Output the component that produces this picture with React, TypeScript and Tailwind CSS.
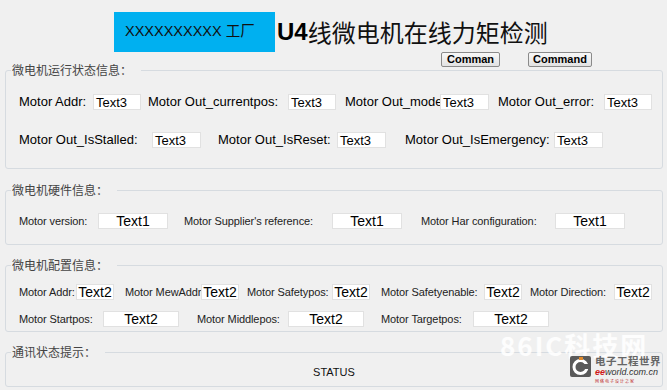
import type { ReactNode } from "react";

const Label = ({ children, className = "" }: { children: ReactNode; className?: string }) => (
  <span className={`shrink-0 whitespace-nowrap ${className}`}>{children}</span>
);

const Box = ({ text, className = "" }: { text: string; className?: string }) => (
  <div
    className={`flex h-[16px] shrink-0 items-center bg-white border border-[#e1e1e1] pt-[1px] whitespace-nowrap overflow-hidden ${className}`}
  >
    {text}
  </div>
);

const Group = ({ title, children, className = "" }: { title: string; children: ReactNode; className?: string }) => (
  <fieldset className={`ml-[5px] w-[658px] border border-[#d6dbe0] rounded-[3px] px-0 ${className}`}>
    <legend className="ml-[5px] pl-[1px] pr-[9px] text-[12px] leading-[16px] text-[#444] font-['Noto_Sans_CJK_SC',sans-serif]">
      {title}
    </legend>
    {children}
  </fieldset>
);

export default function App() {
  return (
    <div className="relative w-[667px] h-[390px] overflow-hidden bg-[#f0f0f0] pt-[12px] text-black font-['Liberation_Sans','Noto_Sans_CJK_SC',Arial,sans-serif]">
      {/* header */}
      <div className="flex h-[40px] items-center ml-[114px]">
        <div className="flex h-[40px] w-[161px] items-center bg-[#00b0f0] pl-[11px] text-[14.5px] text-[#111]">
          XXXXXXXXXX 工厂
        </div>
        <div className="ml-[2px] flex items-center text-[24px] leading-none">
          <span className="font-bold">U4</span>
          <span className="font-['Noto_Sans_CJK_SC',sans-serif] text-[#111]">线微电机在线力矩检测</span>
        </div>
      </div>

      <div className="flex h-[15px] text-[11px] font-bold">
        <button className="ml-[441px] w-[59px] h-[15px] border border-[#8a8a8a] rounded-[2px] bg-gradient-to-b from-[#f8f8f8] to-[#e2e2e2] leading-[13px]">
          Comman
        </button>
        <button className="ml-[28px] w-[64px] h-[15px] border border-[#8a8a8a] rounded-[2px] bg-gradient-to-b from-[#f8f8f8] to-[#e2e2e2] leading-[13px]">
          Command
        </button>
      </div>

      {/* running status */}
      <Group title="微电机运行状态信息：" className="-mt-[5px] pb-[20px]">
        <div className="pl-[13px] mt-[16px] flex h-[16px] items-center text-[13px]">
          <Label className="w-[74px]">Motor Addr:</Label>
          <Box text="Text3" className="w-[48px] pl-[2px]" />
          <Label className="ml-[7px] w-[140px]">Motor Out_currentpos:</Label>
          <Box text="Text3" className="w-[48px] pl-[2px]" />
          <Label className="ml-[9px] w-[95px]">Motor Out_mode</Label>
          <Box text="Text3" className="w-[49px] pl-[2px]" />
          <Label className="ml-[9px] w-[106px]">Motor Out_error:</Label>
          <Box text="Text3" className="w-[48px] pl-[2px]" />
        </div>
        <div className="pl-[13px] mt-[22px] flex h-[16px] items-center text-[13px]">
          <Label className="w-[133px]">Motor Out_IsStalled:</Label>
          <Box text="Text3" className="w-[49px] pl-[2px]" />
          <Label className="ml-[17px] w-[119px]">Motor Out_IsReset:</Label>
          <Box text="Text3" className="w-[49px] pl-[2px]" />
          <Label className="ml-[19px] w-[149px]">Motor Out_IsEmergency:</Label>
          <Box text="Text3" className="w-[49px] pl-[2px]" />
        </div>
      </Group>

      {/* hardware */}
      <Group title="微电机硬件信息：" className="mt-[13px] pb-[15px]">
        <div className="pl-[13px] mt-[15px] flex h-[16px] items-center text-[11px] tracking-[-0.1px] text-[#222]">
          <Label className="w-[79px]">Motor version:</Label>
          <Box text="Text1" className="w-[70px] justify-center text-[14px] tracking-normal text-black" />
          <Label className="ml-[16px] w-[148px]">Motor Supplier's reference:</Label>
          <Box text="Text1" className="w-[70px] justify-center text-[14px] tracking-normal text-black" />
          <Label className="ml-[19px] w-[134px]">Motor Har configuration:</Label>
          <Box text="Text1" className="w-[70px] justify-center text-[14px] tracking-normal text-black" />
        </div>
      </Group>

      {/* config */}
      <Group title="微电机配置信息：" className="mt-[12px] pb-[4px]">
        <div className="pl-[13px] mt-[11px] flex h-[16px] items-center text-[11px] tracking-[-0.1px] text-[#222]">
          <Label className="w-[57px]">Motor Addr:</Label>
          <Box text="Text2" className="w-[38px] justify-center text-[14px] tracking-normal text-black" />
          <Label className="ml-[11px] w-[76px]">Motor MewAddr</Label>
          <Box text="Text2" className="w-[38px] justify-center text-[14px] tracking-normal text-black" />
          <Label className="ml-[8px] w-[85px]">Motor Safetypos:</Label>
          <Box text="Text2" className="w-[38px] justify-center text-[14px] tracking-normal text-black" />
          <Label className="ml-[11px] w-[103px]">Motor Safetyenable:</Label>
          <Box text="Text2" className="w-[38px] justify-center text-[14px] tracking-normal text-black" />
          <Label className="ml-[8px] w-[84px]">Motor Direction:</Label>
          <Box text="Text2" className="w-[38px] justify-center text-[14px] tracking-normal text-black" />
        </div>
        <div className="pl-[13px] mt-[11px] flex h-[16px] items-center text-[11px] tracking-[-0.1px] text-[#222]">
          <Label className="w-[84px]">Motor Startpos:</Label>
          <Box text="Text2" className="w-[76px] justify-center text-[14px] tracking-normal text-black" />
          <Label className="ml-[18px] w-[91px]">Motor Middlepos:</Label>
          <Box text="Text2" className="w-[76px] justify-center text-[14px] tracking-normal text-black" />
          <Label className="ml-[17px] w-[92px]">Motor Targetpos:</Label>
          <Box text="Text2" className="w-[76px] justify-center text-[14px] tracking-normal text-black" />
        </div>
      </Group>

      {/* comm status */}
      <Group title="通讯状态提示：" className="mt-[12px] pb-[7px]">
        <div className="mt-[5px] text-center text-[11px] leading-[14px] text-[#111]">STATUS</div>
      </Group>

      {/* watermark */}
      <div className="absolute left-[500px] top-[334px] text-[26px] font-bold leading-[22px] text-white/85 font-['Noto_Sans_CJK_SC',sans-serif] tracking-[2px]">
        86IC科技网
      </div>
      <div className="absolute left-[570px] top-[356px] flex items-start gap-[4px]">
        <svg width="21" height="21" viewBox="0 0 21 21">
          <rect x="0" y="0" width="21" height="21" rx="2" fill="#5a5a5a" />
          <circle cx="10.5" cy="11" r="6.5" fill="none" stroke="#fff" strokeWidth="3" />
          <rect x="14" y="8" width="6" height="5" fill="#5a5a5a" />
          <rect x="9" y="1" width="4" height="3" fill="#e08a2c" />
        </svg>
        <div className="flex flex-col leading-none">
          <span className="text-[10.5px] font-bold text-[#666] tracking-[0.5px] font-['Noto_Sans_CJK_SC',sans-serif]">电子工程世界</span>
          <span className="mt-[1px] text-[9px] italic text-[#333]">
            <span className="text-[#d01818] font-bold">ee</span>world.com.cn
          </span>
          <span className="mt-[2px] text-[4px] text-[#c03030] tracking-[1px] font-['Noto_Sans_CJK_SC',sans-serif]">
            网络电子设计之家
          </span>
        </div>
      </div>
    </div>
  );
}
